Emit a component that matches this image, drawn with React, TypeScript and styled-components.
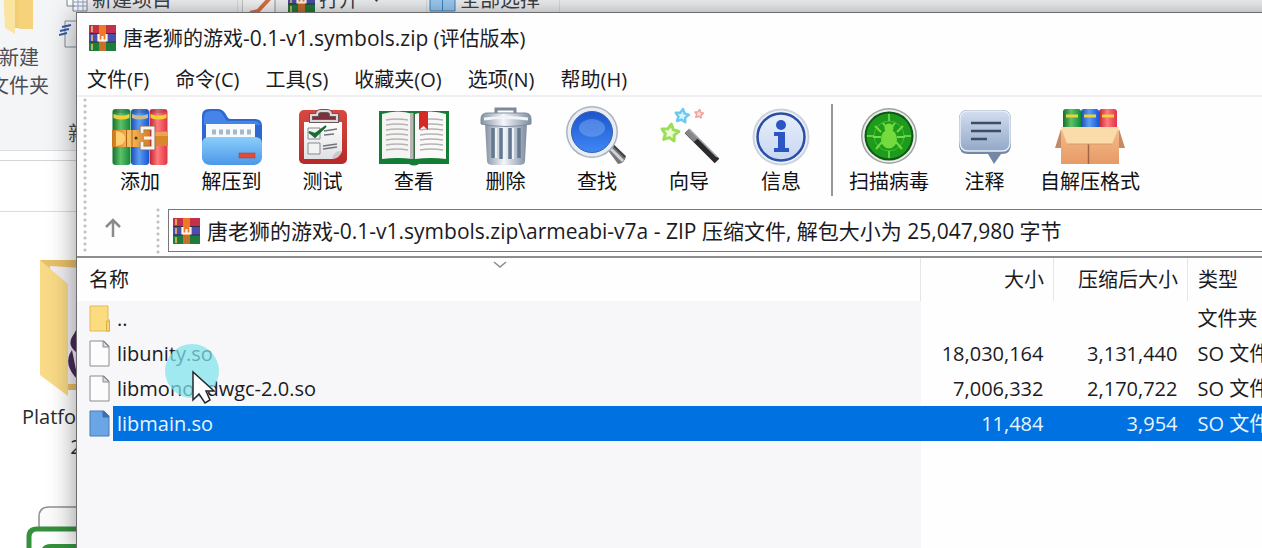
import React from "react";
import styled, { createGlobalStyle } from "styled-components";

const GlobalStyle = createGlobalStyle`
  *, *::before, *::after { box-sizing: border-box; }
  body { margin: 0; }
  body, button, input, table {
    font-family: "Open Sans", "Noto Sans CJK SC", sans-serif;
    font-size: 20px;
    line-height: 28px;
    color: #1b1b1f;
  }
  button { border: 0; padding: 0; background: none; white-space: nowrap; }
  svg { display: block; flex: none; }
`;

const Desktop = styled.div`
  position: relative;
  min-height: 100vh;
  overflow: hidden;
  background: #fff;
`;

/* ---------- Explorer window (behind) ---------- */

const Explorer = styled.section`
  position: absolute;
  top: -50px;
  left: -12px;
  right: 0;
  bottom: 0;
  background: #fff;
  color: #3a3d42;
`;

const Ribbon = styled.div`
  display: flex;
  height: 201px;
  padding-top: 36px;
  background: #f4f5f7;
  border-bottom: 1px solid #dcdde0;
`;

const BigButton = styled.button`
  display: flex;
  flex-direction: column;
  align-items: center;
  width: 62px;
  height: 124px;
  color: #4b4e54;
`;

const RibbonGroup = styled.div<{ $width: number; $divided?: boolean }>`
  display: flex;
  flex-direction: column;
  width: ${(p) => p.$width}px;
  border-right: ${(p) => (p.$divided ? "1px solid #dfe0e3" : "0")};
`;

const RibbonButton = styled.button<{ $indent: number; $height?: number }>`
  display: flex;
  align-items: center;
  gap: 4px;
  height: ${(p) => p.$height ?? 28}px;
  padding-left: ${(p) => p.$indent}px;
  color: #3f4247;
`;

const RibbonLabel = styled.span`
  padding: 66px 0 0 18px;
  color: #4b4e54;
`;

const NavStrip = styled.div`
  height: 61px;
  padding-top: 9px;
  border-bottom: 1px solid #dcdce0;
`;

const NavBox = styled.div`
  border-top: 1px solid #d4d4d8;
`;

const Files = styled.div`
  display: flex;
  flex-direction: column;
  align-items: flex-start;
  padding: 46px 0 0 34px;
  color: #2a2a2e;
`;

const FileTile = styled.div`
  display: flex;
  flex-direction: column;
  align-items: center;
  width: 108px;
  height: 247px;
  line-height: 30px;
`;

const FileName = styled.span`
  align-self: flex-start;
`;

/* ---------- Archive window ---------- */

const ArchiveWindow = styled.main`
  position: absolute;
  top: 12px;
  left: 76px;
  right: -62px;
  bottom: -2px;
  display: flex;
  flex-direction: column;
  background: #fefefe;
  border: 1px solid #6d6d70;
  box-shadow: 0 2px 26px rgba(0, 0, 0, 0.42);
`;

const TitleBar = styled.header`
  display: flex;
  align-items: center;
  gap: 7px;
  height: 50px;
  padding-left: 12px;
`;

const Title = styled.h1`
  margin: 0;
  font-size: 20px;
  line-height: 28px;
  font-weight: 400;
`;

const ArchiveName = styled.span`
  font-size: 21px;
`;

const MenuBar = styled.nav`
  display: flex;
  gap: 26px;
  height: 34px;
  padding: 3px 0 0 10px;
  align-items: flex-start;
  border-bottom: 2px solid #f1eff2;
`;

const Bars = styled.div`
  display: flex;
  padding: 1px 0 0 6px;
`;

const Grip = styled.span`
  flex: none;
  width: 4px;
  align-self: stretch;
  background: radial-gradient(circle at 2px 2px, #c2c2c5 1px, transparent 2px) 0 0 / 4px 6px;
`;

const BarStack = styled.div`
  flex: 1;
  min-width: 0;
`;

const Toolbar = styled.div`
  display: flex;
  height: 110px;
  padding-left: 7px;
`;

const ToolButton = styled.button<{ $width: number }>`
  display: flex;
  flex-direction: column;
  align-items: center;
  flex: none;
  gap: 2px;
  width: ${(p) => p.$width}px;
  padding-top: 8px;
  height: 100px;
  color: #101014;
`;

const ToolDivider = styled.span`
  flex: none;
  width: 2px;
  height: 92px;
  margin: 6px 6px 0 4px;
  background: #97979a;
`;

const PathBar = styled.div`
  display: flex;
  height: 46px;
`;

const UpButton = styled.button`
  display: flex;
  justify-content: center;
  width: 52px;
  padding: 10px 0 0 0;
  margin-right: 17px;
`;

const PathField = styled.label`
  display: flex;
  flex: 1;
  align-items: center;
  gap: 7px;
  height: 43px;
  margin: 1px 0 0 8px;
  padding-left: 4px;
  background: #fff;
  border: 1px solid #77777a;
`;

const PathInput = styled.input`
  flex: 1;
  min-width: 0;
  padding: 0;
  border: 0;
  outline: 0;
  background: none;
  font-size: 21px;
`;

const ListPane = styled.div`
  flex: 1;
  margin-top: 2px;
  border-top: 2px solid #8d8d90;
  background: linear-gradient(to left, #fefefe 402px, #f7f6f9 402px);
`;

const FileTable = styled.table`
  width: 100%;
  table-layout: fixed;
  border-collapse: collapse;
`;

const Head = styled.th<{ $align?: "left" | "right"; $inset?: number }>`
  position: relative;
  height: 43px;
  padding: 0 9px 0 ${(p) => p.$inset ?? 10}px;
  font-weight: 400;
  text-align: ${(p) => p.$align ?? "left"};
  background: #fefefe;
  border-right: 1px solid #e6e5e8;
`;

const SortMark = styled.svg`
  position: absolute;
  top: 2px;
  left: calc(50% - 6px);
`;

const Row = styled.tr<{ $selected?: boolean }>`
  height: 35px;
  color: ${(p) => (p.$selected ? "#e6f4ff" : "#1b1b1f")};
  --fill: ${(p) => (p.$selected ? "#0071e0" : "transparent")};
`;

const Cell = styled.td<{ $align?: "right" }>`
  padding: 0 10px;
  text-align: ${(p) => p.$align ?? "left"};
  white-space: nowrap;
  background: var(--fill);
`;

const NameCell = styled.td`
  padding: 0 0 0 12px;
`;

const NameLine = styled.div`
  display: flex;
  align-items: center;
  gap: 3px;
`;

const NameText = styled.span`
  flex: 1;
  padding-left: 4px;
  line-height: 35px;
  background: var(--fill);
`;

const Pointer = styled.svg`
  position: absolute;
  left: 162px;
  top: 342px;
  pointer-events: none;
`;

/* ---------- Drawings ---------- */

const ArchiveIcon = () => (
  <svg width="27" height="26" viewBox="0 0 27 26">
    <rect width="27" height="9" fill="#c2304a" />
    <rect y="8" width="27" height="9" fill="#4a4fae" />
    <rect y="17" width="27" height="9" fill="#1f7d3c" />
    <path d="M0 8.500H27M0 17H27" stroke="#3b2b48" strokeWidth="1" />
    <path d="M3 1v6M3 10v6M3 19v6" stroke="#f1c76a" strokeWidth="1.500" />
    <rect x="10" width="7" height="26" fill="#ee7a25" />
    <rect x="10" y="17" width="7" height="9" fill="#c7702a" />
    <path d="M9.500 9v6.500h8V9M13.500 11v4" fill="none" stroke="#fff4ea" strokeWidth="2.200" />
  </svg>
);

const Defs = () => (
  <svg width="0" height="0" style={{ position: "absolute" }} aria-hidden="true">
    <defs>
      {[
        ["gGreen", "#14702a", "#5fc26a", "#0f8a38"],
        ["gBlue", "#1a4fb5", "#5f9df0", "#1557d8"],
        ["gRed", "#c41f2c", "#ff7d7d", "#e03345"],
        ["gMetal", "#8391a4", "#f3f6fa", "#7d8ba0"],
        ["gStrap", "#c9761a", "#f9be62", "#d27d20"],
      ].map(([id, a, b, c]) => (
        <linearGradient id={id} key={id}>
          <stop offset="0" stopColor={a} />
          <stop offset="0.450" stopColor={b} />
          <stop offset="1" stopColor={c} />
        </linearGradient>
      ))}
      {[
        ["vFolder", "#8ccdfa", "#4a98e8"],
        ["vBubble", "#d3deef", "#93a8c8"],
        ["vPaper", "#ffffff", "#dfe0e4"],
        ["vRed", "#d8483f", "#b52a2a"],
        ["vInfo", "#e9effa", "#c6d6f2"],
        ["vLens", "#1c55cc", "#3f87f5"],
        ["vBox", "#f3bb8a", "#e79a66"],
      ].map(([id, a, b]) => (
        <linearGradient id={id} key={id} x1="0" y1="0" x2="0" y2="1">
          <stop offset="0" stopColor={a} />
          <stop offset="1" stopColor={b} />
        </linearGradient>
      ))}
    </defs>
  </svg>
);

const Icon = ({ children }: { children: React.ReactNode }) => (
  <svg width="72" height="60" viewBox="0 0 72 60">{children}</svg>
);

const AddIcon = () => (
  <Icon>
    {["gGreen", "gBlue", "gRed"].map((g, i) => (
      <g key={g}>
        <rect x={8.500 + i * 18.500} y="3" width="18" height="56" rx="3" fill={`url(#${g})`} />
        <ellipse cx={17.500 + i * 18.500} cy="5" rx="8" ry="2.200" fill="#2b3540" opacity="0.250" />
        <path d={`M${9.500 + i * 18.500} 8q8 3 16 0v4q-8 3-16 0z`} fill={i === 1 ? "#c9bb8a" : "#f0cf3a"} />
      </g>
    ))}
    <path d="M8 24h38v17H8z" fill="url(#gStrap)" />
    <path d="M48 25h16v15H48z" fill="#d9862c" />
    <path d="M48 26h16v4H48z" fill="#eda452" />
    <path d="M12 25q9 1 9 7.500T12 40z" fill="#ffd071" />
    <path d="M22.500 24v17M28 24v17" stroke="#b0640f" />
    <path d="M38 27v-5h11v20H38v-6" fill="none" stroke="#8a6a52" strokeWidth="4.500" />
    <path d="M38 27v-5h11v20H38v-6M40 32h8" fill="none" stroke="#fbf4ec" strokeWidth="3" />
    <circle cx="32" cy="32" r="1.500" fill="#51300e" />
  </Icon>
);

const ExtractIcon = () => (
  <Icon>
    <path d="M6 10q0-7 7-7h9q4 0 7 4l3 5q1 1 3 1h24q7 0 7 7v28q0 10-9 10H14q-8 0-8-9z" fill="#2d67d2" />
    <path d="M8 12q0-7 7-7h6q4 0 6 4l3 5q1 1 3 1h25q5 0 6 4H8z" fill="#4685e8" />
    <path d="M10 18h49v16H10z" fill="#f7fafd" />
    <path d="M16 26h40" stroke="#a7b7cc" strokeWidth="5" strokeDasharray="4 3" />
    <path d="M6 38q0-7 7-7h46q7 0 7 7v12q0 9-9 9H15q-9 0-9-9z" fill="url(#vFolder)" />
    <rect x="43" y="47" width="16" height="5" fill="#e24c36" stroke="#b3362a" strokeWidth="0.500" />
  </Icon>
);

const TestIcon = () => (
  <Icon>
    <rect x="12" y="4" width="48" height="54" rx="5" fill="url(#vRed)" />
    <path d="M17 16h38v29q-2 7-10 8H17z" fill="url(#vPaper)" />
    <path d="M55 45q-8-1-10 8 8-2 10-8z" fill="#c7c7cc" />
    <path d="M23 7h27v9H23z" fill="#7c3038" />
    <path d="M24 15V9h6q0-4 4-4h6q4 0 4 4h6v6z" fill="none" stroke="#6e5559" strokeWidth="4" />
    <path d="M24 15V9h6q0-4 4-4h6q4 0 4 4h6v6z" fill="none" stroke="#dcd8dc" strokeWidth="2" />
    <path d="M21 22h12v11H21zM21 37h12v11H21z" fill="#f2f2f2" stroke="#85898d" />
    <path d="M22 26l6 5L39 20l-11 8z" fill="#1c6b34" stroke="#1c6b34" strokeWidth="2" />
    <path d="M37 25l13-2M37 29l10-1M36 40l14-2M36 43l14-2" stroke="#707378" strokeWidth="1.300" />
  </Icon>
);

const ViewIcon = () => (
  <Icon>
    <path d="M1 5h70v53H41q-5 3-10 0H1z" fill="#137d36" />
    <path d="M4 8q16-5 31 0v45q-16-2-31 0z" fill="#f5f4f2" />
    <path d="M68 8q-16-5-31 0v45q16-2 31 0z" fill="#faf9f7" />
    <path d="M32 7h4v46h-4z" fill="#b9b7b5" />
    <path d="M36 7v46" stroke="#55574f" strokeWidth="1" />
    {[14, 19, 24, 29, 34, 39, 44].map((y) => (
      <path key={y} d={`M8 ${y}q11-2 22 0M42 ${y}q11-2 23 0`} fill="none" stroke="#b4b3b5" strokeWidth="1.300" />
    ))}
    <path d="M41 6h9v18l-4.500-4L41 24z" fill="#d42a25" />
  </Icon>
);

const DeleteIcon = () => (
  <Icon>
    <path d="M26 8V3h19v5" fill="none" stroke="#7e8896" strokeWidth="3" />
    <path d="M15 17h42l-2 38q0 4-6 4H23q-6 0-6-4z" fill="url(#gMetal)" />
    <path d="M23 22v30M31 22v31M40 22v31M49 22v30" stroke="#66788f" strokeWidth="3.500" />
    <path d="M26 22v30M34 22v31M43 22v31" stroke="#eef3f8" strokeWidth="2" />
    <path d="M11 13q0-6 6-6h38q6 0 6 6v5q-25 5-50 0z" fill="url(#gMetal)" stroke="#808c9b" />
    <path d="M14 13q22-3 44 0" fill="none" stroke="#f0f3f7" strokeWidth="3" />
  </Icon>
);

const FindIcon = () => (
  <Icon>
    <path d="M46 43l6-5 13 12q-1 7-8 8z" fill="#77777a" />
    <path d="M49 42l13 13" stroke="#d2d2d4" strokeWidth="3" />
    <path d="M52 39l12 12" stroke="#434347" strokeWidth="2" />
    <circle cx="31" cy="26" r="26" fill="#a9b4c2" />
    <circle cx="31" cy="26" r="24.500" fill="#e8edf3" />
    <circle cx="31" cy="26" r="20.500" fill="url(#vLens)" stroke="#3960a7" />
    <ellipse cx="31" cy="22" rx="13" ry="9" fill="#86b2f5" opacity="0.450" />
  </Icon>
);

const star = (cx: number, cy: number, r: number) =>
  Array.from({ length: 10 }, (_, i) => {
    const a = (i * Math.PI) / 5 - Math.PI / 2 + 0.15;
    const d = i % 2 ? r * 0.520 : r;
    return `${cx + Math.cos(a) * d},${cy + Math.sin(a) * d}`;
  }).join(" ");

const WizardIcon = () => (
  <Icon>
    <polygon points={star(17, 27, 9)} fill="#e9fbd2" stroke="#9adf55" strokeWidth="3" strokeLinejoin="round" />
    <polygon points={star(29, 10, 7)} fill="#d4f3fd" stroke="#6ccaf0" strokeWidth="2.500" strokeLinejoin="round" />
    <polygon points={star(46, 8, 4.500)} fill="#fde0dc" stroke="#f2a099" strokeWidth="1.500" strokeLinejoin="round" />
    <path d="M34 25l30 30" stroke="#2b2b2e" strokeWidth="6.500" />
    <path d="M34 25l9 9" stroke="#86868a" strokeWidth="6" />
    <path d="M36 23l28 28" stroke="#a6a6aa" strokeWidth="1.500" />
  </Icon>
);

const InfoIcon = () => (
  <Icon>
    <circle cx="36" cy="31" r="28.500" fill="#cdd3de" />
    <circle cx="36" cy="31" r="26.500" fill="#eef2fa" />
    <circle cx="36" cy="31" r="23.500" fill="url(#vInfo)" stroke="#2b4fa6" strokeWidth="2.500" />
    <circle cx="36" cy="19" r="5" fill="#2a55c4" />
    <path d="M29 26h11v16h4v4H29v-4h4V30h-4z" fill="#2a55c4" />
  </Icon>
);

const VirusIcon = () => (
  <Icon>
    <circle cx="36" cy="30" r="28" fill="#9da29f" />
    <circle cx="36" cy="30" r="26.500" fill="#eceeec" />
    <circle cx="36" cy="30" r="24.500" fill="#0c5a14" />
    <circle cx="36" cy="30" r="22.500" fill="#1e9b1c" />
    <circle cx="36" cy="30" r="15" fill="none" stroke="#43c030" />
    <path d="M36 8v7M36 45v7M14 30h7M51 30h7" stroke="#7ede55" strokeWidth="1.500" />
    <path d="M28 26l-6-6M28 31h-8M29 36l-6 7M44 26l6-6M44 31h8M43 36l6 7M33 21l-3-4M39 21l3-4" stroke="#74da3e" strokeWidth="2" />
    <ellipse cx="36" cy="33" rx="8" ry="9.500" fill="#74da3e" />
    <circle cx="36" cy="22" r="4.500" fill="#74da3e" />
  </Icon>
);

const CommentIcon = () => (
  <Icon>
    <path d="M19 4h34q9 0 9 9v25q0 10-9 10h-1l-7 10-6-10H19q-9 0-9-10V13q0-9 9-9z" fill="#7487a6" />
    <path d="M19 5h34q8 0 8 8v23q0 9-8 9H19q-8 0-8-9V13q0-8 8-8z" fill="url(#vBubble)" stroke="#e6edf6" strokeWidth="1.500" />
    <path d="M22 17h30M22 25h30M22 33h16" stroke="#3c4c69" strokeWidth="2.500" />
  </Icon>
);

const SfxIcon = () => (
  <Icon>
    {["gGreen", "gBlue", "gRed"].map((g, i) => (
      <g key={g}>
        <rect x={9 + i * 18} y="3" width="18" height="24" rx="3" fill={`url(#${g})`} />
        <path d={`M${12 + i * 18} 10h12`} stroke="#f0d33a" strokeWidth="3" />
      </g>
    ))}
    <path d="M7 23L1 42h9zM65 23l6 19h-9z" fill="#c58a63" />
    <path d="M7 24h58v34H7z" fill="url(#vBox)" />
    <path d="M34.500 36v22" stroke="#9e6543" strokeWidth="1.500" />
    <path d="M7 21h58l-7 17H13z" fill="#fadcab" />
    <path d="M13 38h45" stroke="#d69a68" />
  </Icon>
);

const PageIcon = ({ selected }: { selected?: boolean }) => (
  <svg width="21" height="27" viewBox="0 0 21 27">
    <path d="M1 1h14l5 5v20H1z" fill={selected ? "#6aa6e6" : "#fcfcfd"} stroke={selected ? "#4a78ad" : "#8c8c90"} />
    <path d="M14 1v6h6z" fill={selected ? "#3e6fae" : "#dcdcdf"} stroke={selected ? "#3e6fae" : "#8c8c90"} />
  </svg>
);

const FolderIcon = () => (
  <svg width="21" height="27" viewBox="0 0 21 27">
    <path d="M1 1h18v14h2v11H1z" fill="#fbdc7e" stroke="#e4bb55" />
    <path d="M17.500 26V16h3v10z" fill="#f8d671" stroke="#dcae45" />
  </svg>
);

/* ---------- Data ---------- */

const menus = ["文件(F)", "命令(C)", "工具(S)", "收藏夹(O)", "选项(N)", "帮助(H)"];

const tools = [
  { label: "添加", art: <AddIcon />, width: 92 },
  { label: "解压到", art: <ExtractIcon />, width: 91 },
  { label: "测试", art: <TestIcon />, width: 91 },
  { label: "查看", art: <ViewIcon />, width: 92 },
  { label: "删除", art: <DeleteIcon />, width: 91 },
  { label: "查找", art: <FindIcon />, width: 92 },
  { label: "向导", art: <WizardIcon />, width: 92 },
  { label: "信息", art: <InfoIcon />, width: 92 },
];

const extraTools = [
  { label: "扫描病毒", art: <VirusIcon />, width: 100 },
  { label: "注释", art: <CommentIcon />, width: 91 },
  { label: "自解压格式", art: <SfxIcon />, width: 120 },
];

const files = [
  { name: "..", size: "", packed: "", type: "文件夹", folder: true },
  { name: "libunity.so", size: "18,030,164", packed: "3,131,440", type: "SO 文件" },
  { name: "libmonobdwgc-2.0.so", size: "7,006,332", packed: "2,170,722", type: "SO 文件" },
  { name: "libmain.so", size: "11,484", packed: "3,954", type: "SO 文件", selected: true },
];

const ExplorerWindow = () => (
  <Explorer>
    <Ribbon>
      <BigButton>
        <svg width="48" height="58" viewBox="0 0 48 58">
          <path d="M14 0h24v42H20z" fill="#f3cd74" />
          <path d="M8 0l12 6v42l-10-6z" fill="#fbe3a0" />
          <path d="M24 0h14v43H24z" fill="#f6d27c" />
        </svg>
        <span>新建</span>
        <span>文件夹</span>
      </BigButton>
      <RibbonGroup $width={188} $divided>
        <RibbonButton $indent={16}>
          <svg width="22" height="24" viewBox="0 0 22 24">
            <path d="M1 0v18h8M7 3h14v20H7z" fill="#fff" stroke="#7d8494" />
            <path d="M7 9h14M7 14h14M7 18h14M12 6v17M17 6v17" stroke="#8fa3c8" />
          </svg>
          新建项目
        </RibbonButton>
        <RibbonButton $indent={9} $height={40}>
          <svg width="26" height="28" viewBox="0 0 26 28">
            <path d="M6 1h19v26H6z" fill="#f3f5f9" stroke="#868c98" />
            <path d="M3 7l9-2M1 11l9-2M0 15l8-2" stroke="#355ca8" strokeWidth="2" />
          </svg>
        </RibbonButton>
        <RibbonLabel>新建</RibbonLabel>
      </RibbonGroup>
      <RibbonGroup $width={50}>
        <RibbonButton $indent={4}>
          <svg width="34" height="28" viewBox="0 0 34 28">
            <path d="M0 0h33v28H0z" fill="#fafafb" stroke="#96989c" />
            <path d="M28 12L16 25l-8 2" fill="none" stroke="#dd7447" strokeWidth="4" />
          </svg>
        </RibbonButton>
      </RibbonGroup>
      <RibbonGroup $width={139} $divided>
        <RibbonButton $indent={0}>
          <ArchiveIcon />
          打开
          <svg width="20" height="8" viewBox="0 0 20 8"><path d="M9 1h9l-4.500 5z" fill="#3f4247" /></svg>
        </RibbonButton>
      </RibbonGroup>
      <RibbonGroup $width={133} $divided>
        <RibbonButton $indent={2}>
          <svg width="27" height="24" viewBox="0 0 27 24">
            <path d="M1 0h25v23H1z" fill="#9fd0f7" stroke="#3f87c9" />
            <path d="M13.500 0v23M1 9h25" stroke="#3f87c9" />
          </svg>
          全部选择
        </RibbonButton>
      </RibbonGroup>
    </Ribbon>
    <NavStrip>
      <NavBox />
    </NavStrip>
    <Files>
      <FileTile>
        <svg width="76" height="144" viewBox="0 0 76 144">
          <path d="M2 2h72v130H30z" fill="#e8c069" />
          <path d="M12 8l62 4v114H20z" fill="#f1eff4" />
          <path d="M36 76q-8 10 2 18l8 18V56zM34 92q-10 14 6 30z" fill="#4b2a5c" />
          <path d="M2 2l28 24v112L2 117z" fill="#f9da86" />
        </svg>
        <FileName>Platform</FileName>
        <span>2</span>
      </FileTile>
      <svg width="108" height="80" viewBox="0 0 108 80">
        <path d="M17 80V12q0-10 10-10h70v78" fill="#fbfbfb" stroke="#909094" strokeWidth="1.500" />
        <path d="M7 80V32q0-8 8-8h93v56z" fill="#fff" stroke="#35913e" strokeWidth="5" />
        <path d="M19 80V48q0-9 10-9h79v41z" fill="#35913e" />
      </svg>
    </Files>
  </Explorer>
);

export default function App() {
  return (
    <Desktop>
      <GlobalStyle />
      <Defs />
      <ExplorerWindow />
      <ArchiveWindow>
        <TitleBar>
          <ArchiveIcon />
          <Title>
            唐老狮的游戏<ArchiveName>-0.1-v1.symbols.zip</ArchiveName> (评估版本)
          </Title>
        </TitleBar>
        <MenuBar>
          {menus.map((m) => (
            <button key={m}>{m}</button>
          ))}
        </MenuBar>
        <Bars>
          <Grip />
          <BarStack>
            <Toolbar>
              {tools.map((t) => (
                <ToolButton key={t.label} $width={t.width}>
                  {t.art}
                  {t.label}
                </ToolButton>
              ))}
              <ToolDivider />
              {extraTools.map((t) => (
                <ToolButton key={t.label} $width={t.width}>
                  {t.art}
                  {t.label}
                </ToolButton>
              ))}
            </Toolbar>
            <PathBar>
              <UpButton aria-label="上一级">
                <svg width="18" height="20" viewBox="0 0 18 20">
                  <path d="M9 19V2M2 9l7-7 7 7" fill="none" stroke="#8b8b8e" strokeWidth="2.500" />
                </svg>
              </UpButton>
              <Grip />
              <PathField>
                <ArchiveIcon />
                <PathInput
                  aria-label="路径"
                  defaultValue="唐老狮的游戏-0.1-v1.symbols.zip\armeabi-v7a - ZIP 压缩文件, 解包大小为 25,047,980 字节"
                />
              </PathField>
            </PathBar>
          </BarStack>
        </Bars>
        <ListPane>
          <FileTable>
            <colgroup>
              <col />
              <col style={{ width: 133 }} />
              <col style={{ width: 134 }} />
              <col style={{ width: 135 }} />
            </colgroup>
            <thead>
              <tr>
                <Head $inset={12}>
                  名称
                  <SortMark width="14" height="10" viewBox="0 0 14 10">
                    <path d="M1 2l6 5 6-5" fill="none" stroke="#8b8b8e" strokeWidth="1.500" />
                  </SortMark>
                </Head>
                <Head $align="right">大小</Head>
                <Head $align="right">压缩后大小</Head>
                <Head>类型</Head>
              </tr>
            </thead>
            <tbody>
              {files.map((f) => (
                <Row key={f.name} $selected={f.selected}>
                  <NameCell>
                    <NameLine>
                      {f.folder ? <FolderIcon /> : <PageIcon selected={f.selected} />}
                      <NameText>{f.name}</NameText>
                    </NameLine>
                  </NameCell>
                  <Cell $align="right">{f.size}</Cell>
                  <Cell $align="right">{f.packed}</Cell>
                  <Cell>{f.type}</Cell>
                </Row>
              ))}
            </tbody>
          </FileTable>
        </ListPane>
      </ArchiveWindow>
      <Pointer width="60" height="66" viewBox="0 0 60 66">
        <circle cx="30" cy="29" r="27" fill="#7fe3ec" opacity="0.720" />
        <path d="M31 30v28l6-6 6 9 5-3-4-9h8z" fill="#fff" stroke="#25282c" strokeWidth="1.500" />
      </Pointer>
    </Desktop>
  );
}
